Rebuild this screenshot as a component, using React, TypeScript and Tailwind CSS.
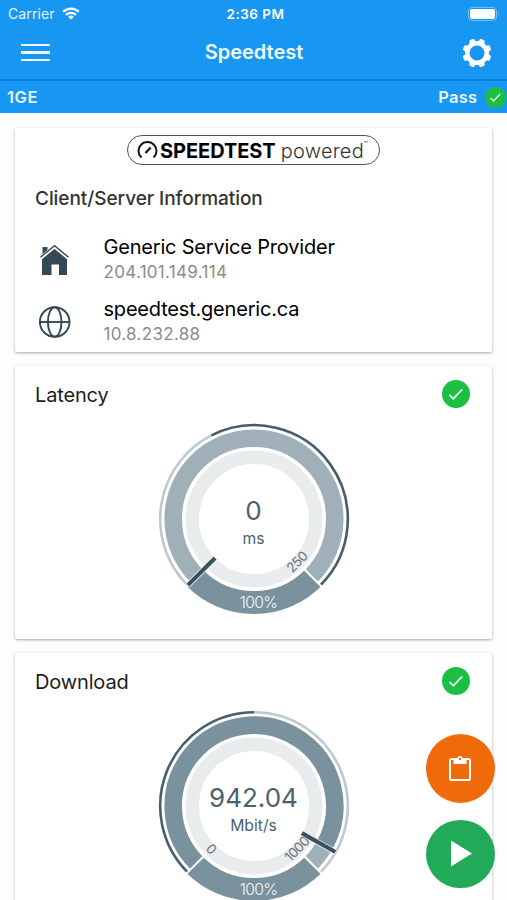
import { ReactNode } from "react";

type Arc = { from: number; to: number; color: string };

type GaugeProps = {
  value: string;
  unit: string;
  needle: number;
  band: Arc[];
  rim: Arc[];
  min?: string;
  max: string;
  maxAngle: number;
};

const C = 96;

// degrees run clockwise from the top of the dial
function point(r: number, deg: number) {
  const a = ((deg - 90) * Math.PI) / 180;
  return [C + r * Math.cos(a), C + r * Math.sin(a)];
}

function arcPath(r: number, from: number, to: number) {
  const [x1, y1] = point(r, from);
  const [x2, y2] = point(r, to);
  const large = to - from > 180 ? 1 : 0;
  return `M${x1} ${y1}A${r} ${r} 0 ${large} 1 ${x2} ${y2}`;
}

function Spoke({ deg, r1, r2, color, width }: { deg: number; r1: number; r2: number; color: string; width: number }) {
  const [x1, y1] = point(r1, deg);
  const [x2, y2] = point(r2, deg);
  return <line x1={x1} y1={y1} x2={x2} y2={y2} stroke={color} strokeWidth={width} />;
}

function ScaleLabel({ deg, rotate, children }: { deg: number; rotate: number; children: ReactNode }) {
  const [x, y] = point(60.5, deg);
  return (
    <text
      transform={`translate(${x} ${y}) rotate(${rotate})`}
      textAnchor="middle"
      dominantBaseline="central"
      fontSize="13.5"
      letterSpacing="-0.6"
      fill="#6b777c"
    >
      {children}
    </text>
  );
}

function Gauge({ value, unit, needle, band, rim, min, max, maxAngle }: GaugeProps) {
  return (
    <svg width="192" height="192" viewBox="0 0 192 192" fill="none" className="font-['Inter',sans-serif]">
      <circle cx={C} cy={C} r="61.7" stroke="#e9eced" strokeWidth="13.4" />
      {band.map((a) => (
        <path key={a.from} d={arcPath(80.8, a.from, a.to)} stroke={a.color} strokeWidth="17.6" />
      ))}
      {rim.map((a) => (
        <path key={a.from} d={arcPath(93.8, a.from, a.to)} stroke={a.color} strokeWidth="2.6" />
      ))}
      <path d={arcPath(83.5, 135, 225)} stroke="#7a929d" strokeWidth="23" />
      <Spoke deg={135} r1={70} r2={96} color="#fff" width={2} />
      <Spoke deg={225} r1={70} r2={96} color="#fff" width={2} />
      {min && (
        <ScaleLabel deg={225} rotate={45}>
          {min}
        </ScaleLabel>
      )}
      <ScaleLabel deg={maxAngle} rotate={maxAngle - 180}>
        {max}
      </ScaleLabel>
      <Spoke deg={needle} r1={54} r2={94} color="#fff" width={5.5} />
      <Spoke deg={needle} r1={55} r2={93.5} color="#3a515e" width={4.2} />
      <text x="95.5" y="96.5" textAnchor="middle" fontSize="26" fill="#4b626d">
        {value}
      </text>
      <text x="95.5" y="120.5" textAnchor="middle" fontSize="15.7" fill="#4b626d">
        {unit}
      </text>
      <text x="100.5" y="184.5" textAnchor="middle" fontSize="15.7" fontWeight="300" letterSpacing="-0.7" fill="#f4f7f8">
        100%
      </text>
    </svg>
  );
}

function CheckBadge({ size }: { size: number }) {
  return (
    <svg width={size} height={size} viewBox="0 0 28 28" fill="none">
      <circle cx="14" cy="14" r="14" fill="#1bc043" />
      <path d="M7.4 14.8l3.9 3.9 9-9.4" stroke="#e6ffea" strokeWidth="1.8" />
    </svg>
  );
}

function Card({ className, children }: { className: string; children: ReactNode }) {
  return (
    <section className={`shrink-0 rounded-[2px] bg-white shadow-[0_1px_3px_rgba(0,0,0,0.34)] ${className}`}>
      {children}
    </section>
  );
}

function ResultCard({ title, children }: { title: string; children: ReactNode }) {
  return (
    <Card className="h-[273px]">
      <div className="flex h-14 items-center justify-between pr-[22.5px] pl-5">
        <h2 className="pt-px text-[20px] tracking-[-0.15px] text-[#1d1d1d]">{title}</h2>
        <CheckBadge size={28} />
      </div>
      <div className="flex justify-center pt-px">{children}</div>
    </Card>
  );
}

function InfoRow({ icon, name, address }: { icon: ReactNode; name: string; address: string }) {
  return (
    <div className="flex h-[62px] items-center">
      <div className="flex w-[88.5px] pt-0.5 pl-6">{icon}</div>
      <div className="pt-px">
        <p className="text-[20px] leading-[26px] tracking-[-0.2px] text-black">{name}</p>
        <p className="text-[17px] leading-[25px] tracking-[0.3px] text-[#8b8b8b]">{address}</p>
      </div>
    </div>
  );
}

function HouseIcon() {
  return (
    <svg width="32" height="32" viewBox="0 0 32 32" fill="#344955">
      <path d="M3.5 3h5v6L3.5 13z" />
      <path d="M15.5 4L28 14.5V31h-8V20.5h-7.5V31H3V14.5z" />
      <path d="M1.5 14L15.5 2.5 29.5 14" fill="none" stroke="#fff" strokeWidth="3.6" />
      <path d="M1.5 13.2L15.5 1.6l14 11.6" fill="none" stroke="#344955" strokeWidth="1.4" />
    </svg>
  );
}

function GlobeIcon() {
  return (
    <svg width="32" height="32" viewBox="0 0 32 32" fill="none" stroke="#344955" strokeWidth="1.9">
      <circle cx="15.7" cy="16" r="14.8" />
      <ellipse cx="15.7" cy="16" rx="6.8" ry="14.8" />
      <path d="M1 16h29.5" />
    </svg>
  );
}

function GearIcon() {
  const teeth = [22.5, 67.5, 112.5, 157.5, 202.5, 247.5, 292.5, 337.5];
  return (
    <svg width="30" height="30" viewBox="0 0 30 30" fill="none">
      <circle cx="15" cy="15" r="9.7" stroke="#fff" strokeWidth="4.4" />
      {teeth.map((deg) => (
        <path key={deg} d="M11.4 4.6L12.6 0.7Q15 0.2 17.4 0.7L18.6 4.6z" fill="#fff" transform={`rotate(${deg} 15 15)`} />
      ))}
    </svg>
  );
}

function Header() {
  return (
    <header className="h-[113px] shrink-0 bg-[#1797f1] text-white">
      <div className="grid h-[27px] grid-cols-3 items-center px-2">
        <div className="flex items-center gap-[7px]">
          <span className="text-[14px] tracking-[0.1px] text-[#e3f3ff]">Carrier</span>
          <svg width="18" height="13" viewBox="0 0 18 13" fill="none" stroke="#fff" strokeWidth="2.3">
            <path d="M1.2 4.8a11 11 0 0 1 15.6 0M4 7.9a7.1 7.1 0 0 1 10 0" />
            <path d="M9 12.6L6.2 9.9a4 4 0 0 1 5.6 0z" fill="#fff" stroke="none" />
          </svg>
        </div>
        <span className="pt-px pl-1 text-center text-[13.5px] font-semibold tracking-[0.5px]">2:36 PM</span>
        <svg className="justify-self-end" width="32" height="14" viewBox="0 0 32 14" fill="none">
          <rect x="1.5" y="0.5" width="28" height="13" rx="3.5" stroke="#6fc0f8" />
          <rect x="3" y="2" width="25" height="10" rx="2" fill="#fff" />
          <path d="M31 5q1.4 2 0 4z" fill="#6fc0f8" />
        </svg>
      </div>
      <div className="grid h-[52px] grid-cols-3 items-center pr-[15px] pb-px pl-4">
        <div className="ml-[5px] flex w-[29px] flex-col gap-[5px]">
          <span className="h-[2.5px] bg-[#eefaff]" />
          <span className="h-[2.5px] bg-[#eefaff]" />
          <span className="h-[2.5px] bg-[#eefaff]" />
        </div>
        <h1 className="-mt-0.5 text-center text-[20px] font-semibold text-[#f1faff]">Speedtest</h1>
        <div className="justify-self-end">
          <GearIcon />
        </div>
      </div>
      <div className="flex h-[34px] items-center justify-between border-t-2 border-[#0b82e0] pr-[1.5px] pl-[7px] text-[16.5px] font-semibold text-[#eaf7ff]">
        <span className="tracking-[0.6px]">1GE</span>
        <span className="flex items-center gap-[7px] tracking-[0.3px]">
          Pass
          <CheckBadge size={21} />
        </span>
      </div>
    </header>
  );
}

function PoweredLogo() {
  return (
    <div className="mx-auto flex h-[30px] w-[253px] items-center rounded-full border border-[#555] pl-[9px] text-black">
      <svg width="21" height="18" viewBox="0 0 21 18" fill="none" stroke="#141414" strokeWidth="2">
        <path d="M4.4 16.6a9 9 0 1 1 12.2 0" />
        <path d="M8.5 12l5.2-5.4" strokeWidth="2.2" />
      </svg>
      <span className="ml-[2px] pt-px text-[20px] font-bold tracking-[-0.05px]">SPEEDTEST</span>
      <span className="ml-[5px] pt-px text-[20px] font-light tracking-[0.25px] text-[#333]">powered</span>
      <span className="-mt-3 text-[6px] leading-none">™</span>
    </div>
  );
}

export default function App() {
  return (
    <div className="relative flex h-[900px] w-full flex-col overflow-hidden bg-[#fdfdfd] font-['Inter',sans-serif]">
      <Header />
      <main className="flex flex-col gap-3.5 px-[15px] pt-[15px]">
        <Card className="h-[224px] pt-[7px]">
          <PoweredLogo />
          <h2 className="mt-5 mb-[15px] pl-5 text-[19px] leading-[28px] font-medium tracking-[-0.05px] text-[#333]">
            Client/Server Information
          </h2>
          <InfoRow icon={<HouseIcon />} name="Generic Service Provider" address="204.101.149.114" />
          <InfoRow icon={<GlobeIcon />} name="speedtest.generic.ca" address="10.8.232.88" />
        </Card>

        <ResultCard title="Latency">
          <Gauge
            value="0"
            unit="ms"
            needle={225}
            band={[{ from: 225, to: 495, color: "#a0b0b8" }]}
            rim={[
              { from: 225, to: 333, color: "#bdc9ce" },
              { from: 333, to: 495, color: "#465e6b" },
            ]}
            max="250"
            maxAngle={135}
          />
        </ResultCard>

        <ResultCard title="Download">
          <Gauge
            value="942.04"
            unit="Mbit/s"
            needle={119.5}
            band={[
              { from: 225, to: 479.5, color: "#7a929d" },
              { from: 479.5, to: 495, color: "#a0b0b8" },
            ]}
            rim={[
              { from: 225, to: 360, color: "#465e6b" },
              { from: 360, to: 495, color: "#bdc9ce" },
            ]}
            min="0"
            max="1000"
            maxAngle={135}
          />
        </ResultCard>
      </main>

      {/* Floating actions */}
      <div className="absolute top-[734px] right-[12.5px] flex flex-col gap-[17px]">
        <button className="flex size-[68.5px] items-center justify-center rounded-full bg-[#f06a0a]">
          <svg width="24" height="28" viewBox="0 0 24 28" fill="none">
            <rect x="2" y="5" width="20" height="21" rx="1.5" stroke="#fff" strokeWidth="2" />
            <path d="M5.5 5h2.6L9.6 3.4a2.7 2.7 0 0 1 4.8 0L15.9 5h2.6v5h-13z" fill="#fff" />
            <circle cx="12" cy="5" r="1.2" fill="#f06a0a" />
          </svg>
        </button>
        <button className="flex size-[68.5px] items-center justify-center rounded-full bg-[#21ab58]">
          <svg className="ml-[3px]" width="21" height="27" viewBox="0 0 22 28" fill="#fff">
            <path d="M0 0.5L22 14 0 27.5z" />
          </svg>
        </button>
      </div>
    </div>
  );
}
